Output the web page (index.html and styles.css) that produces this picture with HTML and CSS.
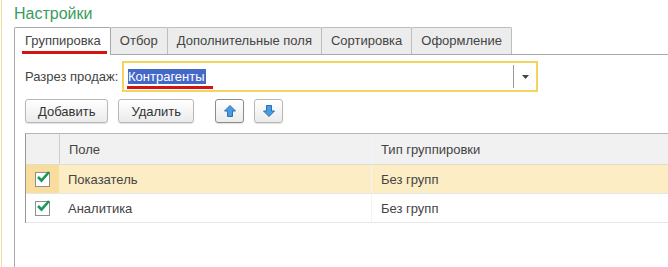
FILE: index.html
```html
<!DOCTYPE html>
<html lang="ru">
<head>
    <meta charset="UTF-8">
    <title>Настройки</title>
    <link rel="stylesheet" href="styles.css">
</head>
<body>
    <div class="window">
        <div class="title">Настройки</div>

        <div class="tabs">
            <div class="tab active">Группировка</div>
            <div class="tab">Отбор</div>
            <div class="tab">Дополнительные поля</div>
            <div class="tab">Сортировка</div>
            <div class="tab">Оформление</div>
        </div>

        <div class="panel">
            <div class="field">
                <label class="field-label">Разрез продаж:</label>
                <div class="combo">
                    <div class="combo-text"><span class="selected">Контрагенты</span></div>
                    <div class="combo-btn">
                        <svg width="7" height="4" viewBox="0 0 7 4"><path d="M0 0h7L3.5 4z" fill="#444"/></svg>
                    </div>
                </div>
            </div>

            <div class="toolbar">
                <button class="btn">Добавить</button>
                <button class="btn">Удалить</button>
                <button class="btn icon-btn first-icon">
                    <svg width="12" height="12" viewBox="0 0 12 12"><path d="M6 .5L11.5 6H8.5v5.5h-5V6H.5z" fill="#4a9ce0" stroke="#2a70b0" stroke-width="1" stroke-linejoin="round"/></svg>
                </button>
                <button class="btn icon-btn">
                    <svg width="12" height="12" viewBox="0 0 12 12"><path d="M6 11.5L11.5 6H8.5V.5h-5V6H.5z" fill="#4a9ce0" stroke="#2a70b0" stroke-width="1" stroke-linejoin="round"/></svg>
                </button>
            </div>

            <div class="grid">
                <div class="row head">
                    <div class="cell check-cell"></div>
                    <div class="cell">Поле</div>
                    <div class="cell">Тип группировки</div>
                </div>
                <div class="row current">
                    <div class="cell check-cell"><span class="checkbox"><svg width="16" height="14" viewBox="0 0 16 14"><path d="M3 7l3.5 3.5L14 2" fill="none" stroke="#16985a" stroke-width="2.6"/></svg></span></div>
                    <div class="cell">Показатель</div>
                    <div class="cell">Без групп</div>
                </div>
                <div class="row">
                    <div class="cell check-cell"><span class="checkbox"><svg width="16" height="14" viewBox="0 0 16 14"><path d="M3 7l3.5 3.5L14 2" fill="none" stroke="#16985a" stroke-width="2.6"/></svg></span></div>
                    <div class="cell">Аналитика</div>
                    <div class="cell">Без групп</div>
                </div>
            </div>
        </div>
    </div>
</body>
</html>
```

FILE: styles.css
```css
body {
    margin: 0;
    background: #fff;
    font-family: "Liberation Sans", Arial, sans-serif;
    font-size: 13px;
    color: #444;
    overflow: hidden;
}
.window {
    margin-left: 1px;
    border-left: 1px solid #efe0a2;
    padding-left: 12px;
    height: 267px;
    display: flex;
    flex-direction: column;
}
.title {
    height: 27px;
    box-sizing: border-box;
    padding-top: 5px;
    font-size: 16px;
    line-height: 18px;
    color: #3a9c5c;
}
.tabs {
    display: flex;
    height: 27px;
    border-bottom: 1px solid #a9a9a9;
}
.tab {
    position: relative;
    padding: 0 9px;
    line-height: 25px;
    border: 1px solid #bdbdbd;
    border-bottom: none;
    border-radius: 2px 2px 0 0;
    margin-left: -1px;
    background: #ececec;
    color: #444;
}
.tab:first-child {
    margin-left: 0;
    padding-left: 10px;
}
.tab.active {
    background: #fff;
    border-color: #a9a9a9;
    height: 27px;
    z-index: 1;
}
.tab.active::after {
    content: "";
    position: absolute;
    left: 7px;
    right: 3px;
    bottom: 1px;
    height: 3px;
    background: #d21414;
}
.panel {
    flex: 1;
    border-left: 1px solid #a9a9a9;
    padding: 6px 0 0 10px;
    overflow: hidden;
}
.field {
    display: flex;
    align-items: center;
    height: 31px;
}
.field-label {
    width: 97px;
}
.combo {
    display: flex;
    width: 416px;
    height: 31px;
    box-sizing: border-box;
    border: 2px solid #f2d55a;
    background: #fff;
}
.combo-text {
    position: relative;
    flex: 1;
    display: flex;
    align-items: center;
    padding-left: 4px;
}
.combo-text::after {
    content: "";
    position: absolute;
    left: 3px;
    top: 23px;
    width: 86px;
    height: 3px;
    background: #d21414;
}
.selected {
    background: #4468c8;
    color: #fff;
    line-height: 15px;
    padding-right: 1px;
}
.combo-btn {
    width: 22px;
    margin: 2px 0;
    border-left: 1px solid #9a9a9a;
    display: flex;
    align-items: center;
    justify-content: center;
}
.toolbar {
    display: flex;
    gap: 10px;
    margin-top: 7px;
}
.btn {
    height: 24px;
    padding: 0 12px;
    font: inherit;
    color: #333;
    border: 1px solid #b8b8b8;
    border-radius: 3px;
    background: linear-gradient(#ffffff, #ebebeb);
    box-shadow: 0 1px 1px rgba(0, 0, 0, 0.12);
}
.icon-btn {
    width: 29px;
    padding: 0;
    display: flex;
    align-items: center;
    justify-content: center;
}
.first-icon {
    margin-left: 11px;
    border-color: #8c8c8c;
}
.grid {
    margin-top: 10px;
    width: calc(100% + 20px);
    border-left: 1px solid #979797;
    border-top: 1px solid #b5b5b5;
}
.row {
    display: grid;
    grid-template-columns: 33px 312px 1fr;
    height: 29px;
    box-sizing: border-box;
    border-bottom: 1px solid #e6e6e6;
}
.row.head {
    height: 31px;
    background: #f1f1f1;
    border-bottom-color: #e2dccb;
}
.row.head .cell + .cell {
    border-left: 1px solid #cfcfcf;
}
.row .cell + .cell + .cell {
    border-left: 1px solid #f3f3f3;
}
.row.current {
    background: #fcedc4;
}
.row.current .check-cell {
    background: #f9dd9c;
}
.cell {
    display: flex;
    align-items: center;
    padding-left: 9px;
}
.check-cell {
    padding-left: 0;
    justify-content: center;
}
.checkbox {
    position: relative;
    width: 13px;
    height: 13px;
    border: 1px solid #8f8f8f;
    background: #fff;
}
.checkbox svg {
    position: absolute;
    left: -1px;
    top: -3px;
}
```
